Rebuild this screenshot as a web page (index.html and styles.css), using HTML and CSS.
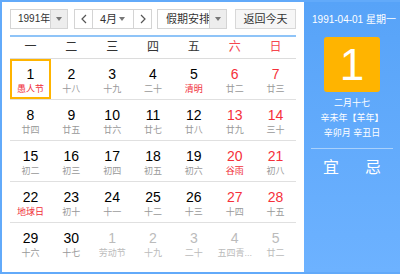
FILE: index.html
```
<html>
    <head>
        <meta charset="utf-8">
        <link rel="stylesheet" href="styles.css">
    </head>
    <body>
        <div id="calendar">
            <div id="main">
                <div class="toolbar">
                    <div class="select year">
                        <span class="label">1991年</span>
                        <span class="arrow"><i class="tri"></i></span>
                    </div>
                    <div class="select month">
                        <span class="nav"><svg width="6" height="10" viewBox="0 0 6 10"><polyline points="5,1 1,5 5,9" fill="none" stroke="#555" stroke-width="1.2"/></svg></span>
                        <span class="label">4月</span>
                        <span class="plain-arrow"><i class="tri"></i></span>
                        <span class="nav"><svg width="6" height="10" viewBox="0 0 6 10"><polyline points="1,1 5,5 1,9" fill="none" stroke="#555" stroke-width="1.2"/></svg></span>
                    </div>
                    <div class="select holiday-select">
                        <span class="label">假期安排</span>
                        <span class="arrow"><i class="tri"></i></span>
                    </div>
                    <div class="today-btn">返回今天</div>
                </div>
                <div class="weekdays">
                    <div>一</div><div>二</div><div>三</div><div>四</div><div>五</div>
                    <div class="weekend">六</div><div class="weekend">日</div>
                </div>
                <div id="days"></div>
            </div>
            <div id="side">
                <div class="side-date">1991-04-01 星期一</div>
                <div class="big-day">1</div>
                <div class="lunar-line">二月十七</div>
                <div class="lunar-line">辛未年【羊年】</div>
                <div class="lunar-line">辛卯月 辛丑日</div>
                <div class="side-rule"></div>
                <div class="yiji"><span>宜</span><span>忌</span></div>
            </div>
        </div>
        <script>
            // day, lunar, flags: w = weekend, f = festival (red lunar text), o = other month, s = selected
            var days = [
                [1, "愚人节", "fs"], [2, "十八", ""], [3, "十九", ""], [4, "二十", ""], [5, "清明", "f"], [6, "廿二", "w"], [7, "廿三", "w"],
                [8, "廿四", ""], [9, "廿五", ""], [10, "廿六", ""], [11, "廿七", ""], [12, "廿八", ""], [13, "廿九", "w"], [14, "三十", "w"],
                [15, "初二", ""], [16, "初三", ""], [17, "初四", ""], [18, "初五", ""], [19, "初六", ""], [20, "谷雨", "wf"], [21, "初八", "w"],
                [22, "地球日", "f"], [23, "初十", ""], [24, "十一", ""], [25, "十二", ""], [26, "十三", ""], [27, "十四", "w"], [28, "十五", "w"],
                [29, "十六", ""], [30, "十七", ""], [1, "劳动节", "o"], [2, "十九", "o"], [3, "二十", "o"], [4, "五四青...", "o"], [5, "廿二", "o"]
            ];
            var html = "";
            for (var i = 0; i < days.length; i++) {
                var d = days[i];
                var cls = "day";
                if (d[2].indexOf("w") >= 0) cls += " weekend";
                if (d[2].indexOf("f") >= 0) cls += " festival";
                if (d[2].indexOf("o") >= 0) cls += " other";
                if (d[2].indexOf("s") >= 0) cls += " selected";
                if (i >= 28) cls += " last";
                html += '<div class="' + cls + '"><div class="num">' + d[0] + '</div><div class="lunar">' + d[1] + '</div></div>';
            }
            document.getElementById("days").innerHTML = html;
        </script>
    </body>
</html>
```
FILE: styles.css
```
body {
    margin: 0;
    width: 400px;
    height: 275px;
    overflow: hidden;
    font-family: 'Liberation Sans', 'Noto Sans CJK SC', sans-serif;
    background: white;
}

#calendar {
    display: flex;
    width: 400px;
    height: 274px;
    box-sizing: border-box;
    border: 2px solid #62aafa;
    border-right: none;
}

#main {
    width: 302px;
    flex-shrink: 0;
    padding: 7px 8px 0 8px;
    box-sizing: border-box;
}

.toolbar {
    display: flex;
    height: 20px;
    font-size: 11px;
    color: #333;
    white-space: nowrap;
}

.select {
    display: flex;
    flex-shrink: 0;
    height: 20px;
    box-sizing: border-box;
    border: 1px solid #d4d4d4;
    background: white;
}

.select .label {
    line-height: 18px;
    overflow: hidden;
}

.select .arrow {
    width: 16px;
    flex-shrink: 0;
    background: #ededed;
    border-left: 1px solid #d4d4d4;
    display: flex;
    align-items: center;
    justify-content: center;
}

.tri {
    width: 0;
    height: 0;
    border-left: 3.5px solid transparent;
    border-right: 3.5px solid transparent;
    border-top: 4px solid #777;
}

.year {
    width: 58px;
}

.year .label {
    flex: 1;
    padding-left: 7px;
    font-size: 10px;
}

.month {
    width: 78px;
    margin-left: 6px;
}

.month .nav {
    width: 17px;
    flex-shrink: 0;
    display: flex;
    align-items: center;
    justify-content: center;
}

.month .nav:first-child {
    border-right: 1px solid #d4d4d4;
}

.month .nav:last-child {
    border-left: 1px solid #d4d4d4;
}

.month .label {
    flex: 1;
    padding-left: 7px;
}

.plain-arrow {
    width: 14px;
    flex-shrink: 0;
    display: flex;
    align-items: center;
}

.holiday-select {
    width: 70px;
    margin-left: 5px;
}

.holiday-select .label {
    flex: 1;
    padding-left: 8px;
}

.today-btn {
    width: 61px;
    flex-shrink: 0;
    height: 20px;
    margin-left: 8px;
    box-sizing: border-box;
    border: 1px solid #d8d8d8;
    background: #f6f6f6;
    line-height: 18px;
    text-align: center;
}

.weekdays {
    display: grid;
    grid-template-columns: repeat(7, minmax(0, 1fr));
    width: 286px;
    margin-top: 6px;
    border-top: 2px solid #8fc4f8;
    border-bottom: 1px solid #dcdcdc;
    height: 24px;
    box-sizing: border-box;
    line-height: 21px;
    font-size: 12px;
    color: #333;
    text-align: center;
}

.weekdays .weekend {
    color: #f5474f;
}

#days {
    display: grid;
    grid-template-columns: repeat(7, minmax(0, 1fr));
    width: 286px;
}

.day {
    height: 41px;
    box-sizing: border-box;
    border-bottom: 1px solid #e0e0e0;
    text-align: center;
    padding-top: 7px;
}

.day.last {
    border-bottom: none;
}

.num {
    font-size: 14px;
    line-height: 16px;
    color: #000;
}

.lunar {
    font-size: 9px;
    line-height: 12px;
    margin-top: 1px;
    color: #999;
    white-space: nowrap;
    overflow: hidden;
}

.day.weekend .num {
    color: #f5303a;
}

.day.festival .lunar {
    color: #f0303a;
}

.day.other .num,
.day.other .lunar {
    color: #bbb;
}

.day.selected {
    box-shadow: inset 0 0 0 2px #ffb400;
}

#side {
    flex: 1;
    background: linear-gradient(#57a3f8, #6db2ff);
    color: white;
    display: flex;
    flex-direction: column;
    align-items: center;
    padding-top: 11px;
    white-space: nowrap;
}

.side-date {
    font-size: 10px;
    line-height: 14px;
    padding-left: 4px;
}

.big-day {
    width: 56px;
    height: 55px;
    margin-top: 10px;
    background: #ffb400;
    border-radius: 3px;
    font-size: 44px;
    line-height: 55px;
    text-align: center;
    margin-bottom: 4px;
}

.lunar-line {
    font-size: 9px;
    line-height: 15px;
}

.side-rule {
    width: 82px;
    height: 1px;
    background: #a9d1fc;
    margin-top: 7px;
}

.yiji {
    display: flex;
    gap: 26px;
    font-size: 16px;
    line-height: 20px;
    margin-top: 9px;
}
```
